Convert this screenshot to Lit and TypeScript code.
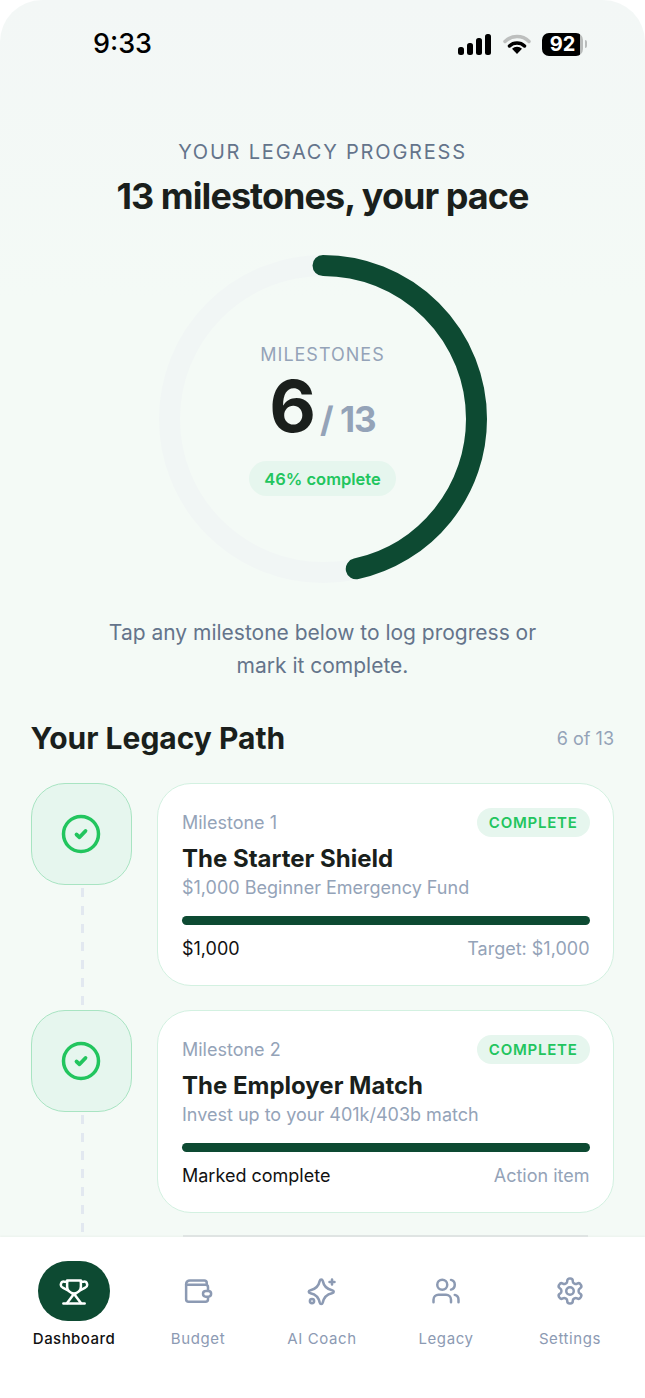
import {LitElement, css, html, svg} from 'lit'
import {customElement} from 'lit/decorators.js'

const RADIUS = 153.5
const CIRC = 2 * Math.PI * RADIUS

const milestones = [
  {label: 'Milestone 1', title: 'The Starter Shield', sub: '$1,000 Beginner Emergency Fund', left: '$1,000', right: 'Target: $1,000'},
  {label: 'Milestone 2', title: 'The Employer Match', sub: 'Invest up to your 401k/403b match', left: 'Marked complete', right: 'Action item'},
]

const tabs = [
  {name: 'Dashboard', active: true, icon: svg`<path d="M6.500 3.500h11v5a5.500 5.500 0 0 1-11 0Z"/><path d="M6.500 4.500H4a2.500 2.500 0 0 0-1 4.800l3.800 2"/><path d="M17.500 4.500H20a2.500 2.500 0 0 1 1 4.800l-3.800 2"/><path d="M11 14.500v1l-4.500 6"/><path d="M13 14.500v1l4.500 6"/><path d="M3.500 22h17"/>`},
  {name: 'Budget', active: false, icon: svg`<path d="M19 7V5.500a2 2 0 0 0-2-2H5.500a3 3 0 0 0-3 3v12a2 2 0 0 0 2 2H18a2 2 0 0 0 2-2v-3"/><path d="M2.500 7H18a2 2 0 0 1 2 2v3"/><rect x="16" y="12" width="6.500" height="4.500" rx="2.250" fill="#fff"/>`},
  {name: 'AI Coach', active: false, icon: svg`<path d="M11.400 2.800C12 2.800 12.400 3.200 12.600 3.900C13.500 8.300 15.500 10.400 20 11.400C21 11.600 21.400 12 21.400 12.600C21.400 13.200 21 13.600 20 13.800C15.500 14.800 13.500 16.900 12.600 21.300C12.400 22 12 22.400 11.400 22.400C10.800 22.400 10.400 22 10.200 21.300C9.300 16.900 7.300 14.800 2.800 13.800C1.800 13.600 1.400 13.200 1.400 12.600C1.400 12 1.800 11.600 2.800 11.400C7.300 10.400 9.300 8.300 10.200 3.900C10.400 3.200 10.800 2.800 11.400 2.800Z"/><path d="M20 2.800v4"/><path d="M18 4.800h4"/><circle cx="4" cy="20" r="1.700"/>`},
  {name: 'Legacy', active: false, icon: svg`<path d="M16 21v-2a4 4 0 0 0-4-4H6a4 4 0 0 0-4 4v2"/><circle cx="9" cy="7" r="4"/><path d="M22 21v-2a4 4 0 0 0-3-3.870"/><path d="M16 3.130a4 4 0 0 1 0 7.750"/>`},
  {name: 'Settings', active: false, icon: svg`<path d="M12.220 2h-.440a2 2 0 0 0-2 2v.180a2 2 0 0 1-1 1.730l-.430.250a2 2 0 0 1-2 0l-.150-.080a2 2 0 0 0-2.730.730l-.220.380a2 2 0 0 0 .730 2.730l.150.100a2 2 0 0 1 1 1.720v.510a2 2 0 0 1-1 1.740l-.150.090a2 2 0 0 0-.730 2.730l.220.380a2 2 0 0 0 2.730.730l.150-.080a2 2 0 0 1 2 0l.430.250a2 2 0 0 1 1 1.730V20a2 2 0 0 0 2 2h.440a2 2 0 0 0 2-2v-.180a2 2 0 0 1 1-1.730l.430-.250a2 2 0 0 1 2 0l.150.080a2 2 0 0 0 2.730-.730l.220-.390a2 2 0 0 0-.730-2.730l-.150-.080a2 2 0 0 1-1-1.740v-.500a2 2 0 0 1 1-1.740l.150-.090a2 2 0 0 0 .730-2.730l-.220-.380a2 2 0 0 0-2.730-.730l-.150.080a2 2 0 0 1-2 0l-.430-.250a2 2 0 0 1-1-1.730V4a2 2 0 0 0-2-2Z"/><circle cx="12" cy="12" r="3"/>`},
]

@customElement('app-root')
export class AppRoot extends LitElement {

  static styles = css`
    :host {
      display: block;
      font-family: Inter, "Liberation Sans", sans-serif;
      background: #fff;
    }

    .shell {
      display: flex;
      flex-direction: column;
      height: 1398px;
      overflow: hidden;
      border-radius: 42px 42px 0 0;
      background: linear-gradient(180deg, #f3f7f6 0, #f4faf6 300px);
    }

    .main {
      flex: 1;
      min-height: 0;
      overflow: hidden;
    }

    /* status bar */
    .status {
      display: flex;
      justify-content: space-between;
      align-items: center;
      height: 32px;
      padding: 28px 62px 0 93px;
    }
    .time {
      font-size: 27px;
      font-weight: 500;
      color: #000;
      line-height: 32px;
    }
    .status-icons {
      display: flex;
      align-items: center;
      gap: 11px;
    }
    .battery {
      display: flex;
      align-items: center;
      justify-content: center;
      width: 41px;
      height: 23px;
      border-radius: 7px;
      background: linear-gradient(90deg, #000 0 92%, #b9bcbb 92%);
      color: #fff;
      font-size: 20px;
      font-weight: 700;
      line-height: 23px;
      position: relative;
    }
    .battery::after {
      content: '';
      position: absolute;
      right: -4px;
      top: 7px;
      width: 2px;
      height: 8px;
      border-radius: 0 2px 2px 0;
      background: #b9bcbb;
    }

    /* hero */
    .hero {
      display: flex;
      flex-direction: column;
      align-items: center;
      padding-top: 78px;
    }
    .eyebrow {
      font-size: 20px;
      line-height: 28px;
      letter-spacing: 1.800px;
      color: #64748b;
    }
    .headline {
      margin: 5px 0 0;
      font-size: 36px;
      line-height: 50px;
      font-weight: 700;
      letter-spacing: -0.950px;
      color: #1a1f1c;
    }
    .ring {
      position: relative;
      width: 328px;
      height: 328px;
      margin-top: 34px;
    }
    .ring svg {
      display: block;
      width: 100%;
      height: 100%;
    }
    .ring-inner {
      position: absolute;
      inset: 0;
      display: flex;
      flex-direction: column;
      align-items: center;
      padding-top: 88px;
    }
    .ring-label {
      font-size: 18px;
      line-height: 24px;
      letter-spacing: 1px;
      color: #94a3b8;
    }
    .count {
      display: flex;
      align-items: baseline;
      gap: 4px;
      margin-top: 1px;
      font-weight: 700;
      line-height: 76px;
    }
    .count-big {
      font-size: 72px;
      color: #1a1f1c;
    }
    .count-of {
      font-size: 35px;
      letter-spacing: -1px;
      color: #94a3b8;
    }
    .pill {
      margin-top: 4px;
      padding: 0 15px;
      height: 35px;
      display: flex;
      align-items: center;
      border-radius: 18px;
      background: #e6f6ee;
      color: #22c55e;
      font-size: 16.500px;
      font-weight: 600;
    }
    .hint {
      margin: 33px 0 0;
      width: 460px;
      text-align: center;
      font-size: 21px;
      line-height: 33px;
      color: #64748b;
    }

    /* path */
    .path {
      padding: 35px 31px 0 30.500px;
    }
    .path-head {
      display: flex;
      justify-content: space-between;
      align-items: center;
      height: 42px;
      margin-bottom: 24px;
    }
    .path-title {
      font-size: 30px;
      font-weight: 700;
      color: #1a1f1c;
    }
    .path-count {
      font-size: 18px;
      color: #94a3b8;
    }
    .row {
      display: flex;
      gap: 25.500px;
      height: 227px;
    }
    .rail {
      display: flex;
      flex-direction: column;
      align-items: center;
      flex: none;
      width: 101px;
    }
    .badge {
      flex: none;
      display: flex;
      align-items: center;
      justify-content: center;
      box-sizing: border-box;
      width: 101px;
      height: 102px;
      border-radius: 34px;
      border: 1.500px solid #a8e4c2;
      background: #e6f6ee;
      color: #22c55e;
    }
    .badge svg {
      width: 40px;
      height: 40px;
    }
    .dash {
      flex: 1;
      width: 3px;
      margin: 3px 0 0 3px;
      background: repeating-linear-gradient(180deg, #e2e8f0 0 9px, transparent 9px 18px);
    }
    .card {
      flex: 1;
      box-sizing: border-box;
      height: 203px;
      padding: 24px 23.500px 0 24px;
      border-radius: 34px;
      border: 1.500px solid #d3f1e1;
      background: #fff;
    }
    .card-top {
      display: flex;
      justify-content: space-between;
      align-items: center;
      height: 29px;
    }
    .card-label {
      font-size: 18px;
      color: #94a3b8;
    }
    .tag {
      display: flex;
      align-items: center;
      height: 29px;
      padding: 0 12px;
      border-radius: 15px;
      background: #e6f6ee;
      color: #22c55e;
      font-size: 15px;
      font-weight: 600;
      letter-spacing: 0.750px;
    }
    .card-title {
      margin-top: 6px;
      font-size: 24px;
      line-height: 32px;
      font-weight: 700;
      color: #1a1f1c;
    }
    .card-sub {
      font-size: 18px;
      line-height: 26px;
      color: #94a3b8;
    }
    .bar {
      height: 9px;
      margin-top: 15px;
      border-radius: 5px;
      background: #0d4a32;
    }
    .card-foot {
      display: flex;
      justify-content: space-between;
      margin-top: 11px;
      font-size: 18px;
      line-height: 26px;
      color: #111;
    }
    .card-foot span:last-child {
      color: #94a3b8;
    }

    /* tab bar */
    .nav {
      flex: none;
      display: grid;
      grid-template-columns: repeat(5, 124px);
      height: 161px;
      box-sizing: border-box;
      padding: 24px 0 0 12px;
      background: #fff;
      box-shadow: 0 -1px 2px rgba(15, 40, 30, 0.04);
      position: relative;
    }
    /* edge of the next card, just showing above the bar */
    .nav::before {
      content: '';
      position: absolute;
      left: 183px;
      right: 57px;
      top: -2px;
      height: 1.500px;
      background: #dfe4e3;
    }
    .tab {
      display: flex;
      flex-direction: column;
      align-items: center;
      color: #8c9ab3;
    }
    .tab-icon {
      display: flex;
      align-items: center;
      justify-content: center;
      width: 72px;
      height: 60px;
      border-radius: 30px;
    }
    .tab-icon svg {
      width: 30px;
      height: 30px;
    }
    .tab.active .tab-icon {
      background: #0d4a32;
      color: #fff;
    }
    .tab-name {
      margin-top: 8px;
      font-size: 15px;
      line-height: 20px;
      letter-spacing: 0.600px;
    }
    .tab.active .tab-name {
      color: #111;
      font-weight: 500;
      letter-spacing: 0.450px;
    }
  `

  renderStatus() {
    return html`
      <div class="status">
        <span class="time">9:33</span>
        <div class="status-icons">
          <svg width="34" height="22" viewBox="0 0 34 22">
            <rect x="0" y="14" width="6" height="8" rx="2.500" fill="#000"></rect>
            <rect x="9" y="10" width="6" height="12" rx="2.500" fill="#000"></rect>
            <rect x="18" y="5" width="6" height="17" rx="2.500" fill="#000"></rect>
            <rect x="27" y="1" width="6" height="21" rx="2.500" fill="#000"></rect>
          </svg>
          <svg width="28" height="22" viewBox="0 0 28 22" fill="none">
            <path d="M2 8.500a17 17 0 0 1 24 0" stroke="#bdbfbe" stroke-width="3.500" stroke-linecap="round"></path>
            <path d="M6.500 13a11 11 0 0 1 15 0" stroke="#000" stroke-width="3.500" stroke-linecap="round"></path>
            <path d="M14 21l-5-5.200a7 7 0 0 1 10 0Z" fill="#000"></path>
          </svg>
          <div class="battery">92</div>
        </div>
      </div>
    `
  }

  renderRing() {
    const done = CIRC * 0.465
    return html`
      <div class="ring">
        <svg viewBox="0 0 328 328" fill="none">
          <circle cx="164" cy="164" r="${RADIUS}" stroke="#f1f6f5" stroke-width="21"></circle>
          <circle cx="164" cy="164" r="${RADIUS}" stroke="#0d4a32" stroke-width="21" stroke-linecap="round"
            stroke-dasharray="${done} ${CIRC}" transform="rotate(-90 164 164)"></circle>
        </svg>
        <div class="ring-inner">
          <div class="ring-label">MILESTONES</div>
          <div class="count">
            <span class="count-big">6</span>
            <span class="count-of">/ 13</span>
          </div>
          <div class="pill">46% complete</div>
        </div>
      </div>
    `
  }

  renderMilestone(m: typeof milestones[number]) {
    return html`
      <div class="row">
        <div class="rail">
          <div class="badge">
            <svg viewBox="0 0 40 40" fill="none" stroke="currentColor" stroke-linecap="round" stroke-linejoin="round">
              <circle cx="20" cy="20" r="17.500" stroke-width="3.500"></circle>
              <path d="M15.500 20.500l3 2.800 6-6.300" stroke-width="3.800"></path>
            </svg>
          </div>
          <div class="dash"></div>
        </div>
        <div class="card">
          <div class="card-top">
            <span class="card-label">${m.label}</span>
            <span class="tag">COMPLETE</span>
          </div>
          <div class="card-title">${m.title}</div>
          <div class="card-sub">${m.sub}</div>
          <div class="bar"></div>
          <div class="card-foot"><span>${m.left}</span><span>${m.right}</span></div>
        </div>
      </div>
    `
  }

  render() {
    return html`
      <div class="shell">
        <div class="main">
          ${this.renderStatus()}
          <section class="hero">
            <div class="eyebrow">YOUR LEGACY PROGRESS</div>
            <h1 class="headline">13 milestones, your pace</h1>
            ${this.renderRing()}
            <p class="hint">Tap any milestone below to log progress or mark it complete.</p>
          </section>
          <section class="path">
            <div class="path-head">
              <span class="path-title">Your Legacy Path</span>
              <span class="path-count">6 of 13</span>
            </div>
            ${milestones.map(m => this.renderMilestone(m))}
          </section>
        </div>
        <nav class="nav">
          ${tabs.map(t => html`
            <div class="tab ${t.active ? 'active' : ''}">
              <div class="tab-icon">
                <svg viewBox="0 0 24 24" fill="none" stroke="currentColor" stroke-width="2" stroke-linecap="round" stroke-linejoin="round">${t.icon}</svg>
              </div>
              <div class="tab-name">${t.name}</div>
            </div>
          `)}
        </nav>
      </div>
    `
  }
}
